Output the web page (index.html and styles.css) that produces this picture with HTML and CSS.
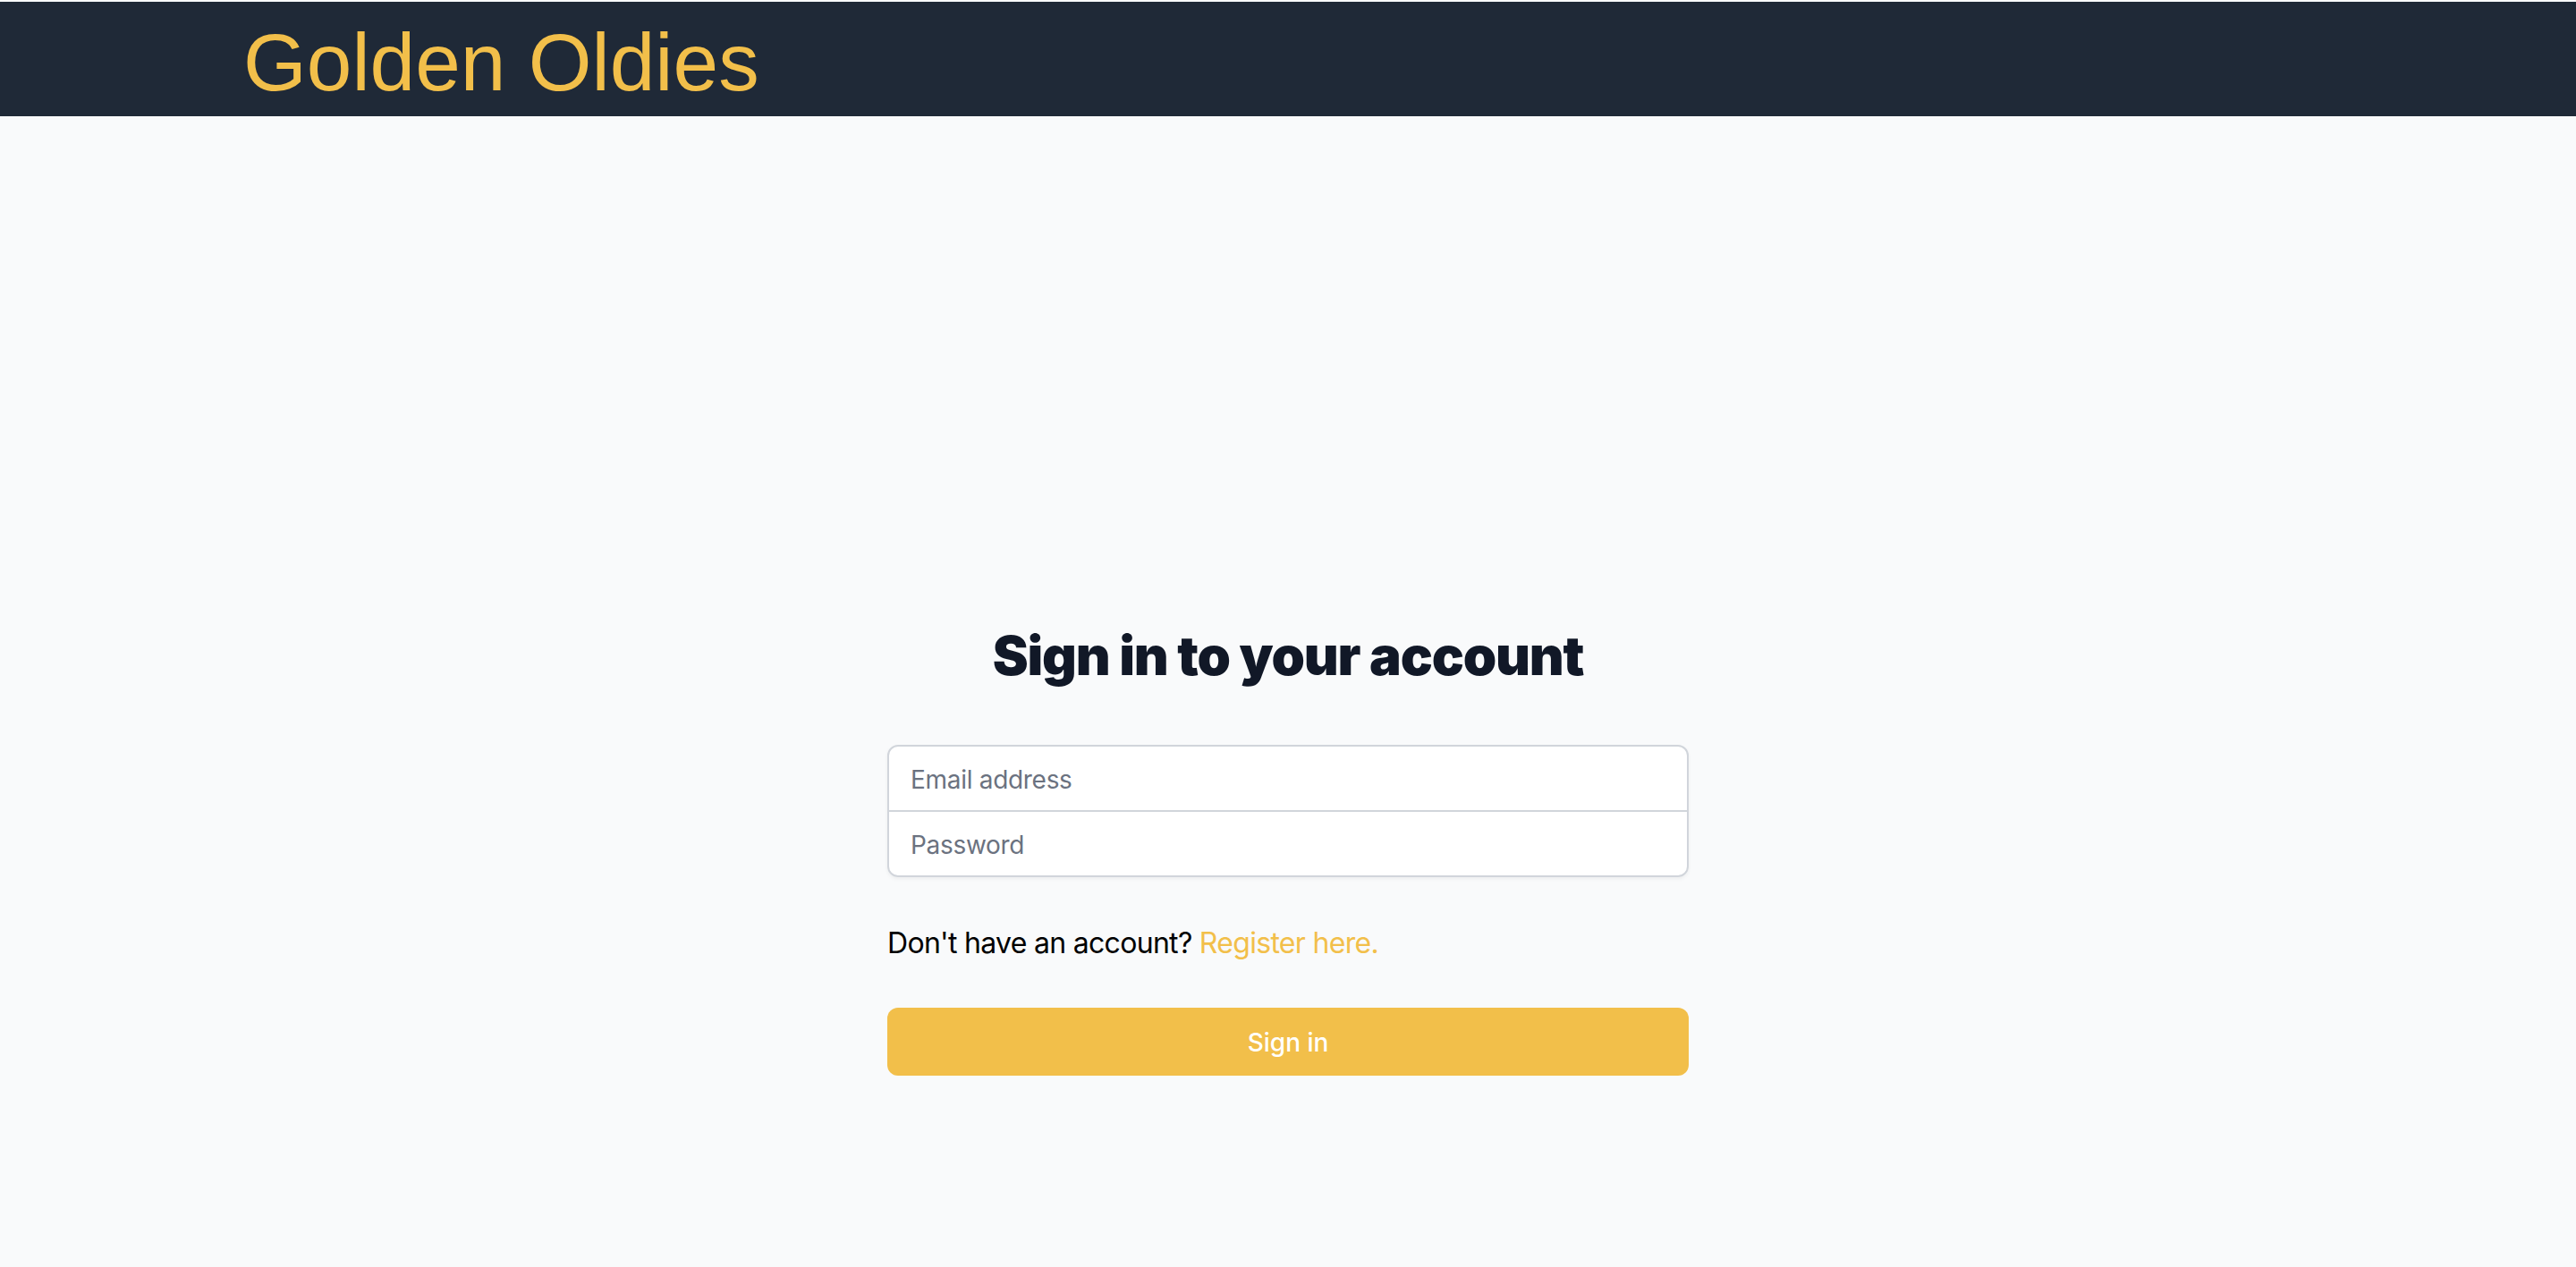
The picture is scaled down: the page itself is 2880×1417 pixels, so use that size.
FILE: index.html
```html
<!DOCTYPE html>
<html lang="en">
<head>
<meta charset="utf-8">
<title>Golden Oldies</title>
<link rel="stylesheet" href="styles.css">
</head>
<body>
<header class="topbar">
  <div class="brand">Golden Oldies</div>
</header>
<main class="main">
  <div class="panel">
    <h2 class="title">Sign in to your account</h2>
    <form class="form">
      <div class="fields">
        <input class="field field-top" type="email" placeholder="Email address">
        <input class="field field-bottom" type="password" placeholder="Password">
      </div>
      <p class="note">Don't have an account? <a class="link" href="#">Register here.</a></p>
      <button class="submit" type="button">Sign in</button>
    </form>
  </div>
</main>
</body>
</html>
```

FILE: styles.css
```css
* { box-sizing: border-box; }
html, body { margin: 0; padding: 0; }
body {
  background: #f9fafb;
  padding-top: 2px;
  font-family: Inter, "Noto Sans", sans-serif;
  min-height: 100vh;
}
.topbar {
  height: 128px;
  background: #1f2937;
  display: flex;
  align-items: center;
  padding: 9px 0 0 272px;
}
.brand {
  font-family: "Liberation Sans", Arial, sans-serif;
  font-size: 91px;
  line-height: 1.1;
  color: #f2bf4a;
}
.main {
  display: flex;
  justify-content: center;
  padding-top: 567px;
}
.panel {
  width: 896px;
  display: flex;
  flex-direction: column;
}
.title {
  margin: 0;
  text-align: center;
  font-size: 60px;
  line-height: 72px;
  font-weight: 900;
  color: #111827;
  letter-spacing: -1.2px;
}
.form {
  margin-top: 64px;
  display: flex;
  flex-direction: column;
}
.fields {
  display: flex;
  flex-direction: column;
  border-radius: 12px;
  box-shadow: 0 2px 4px rgba(0,0,0,0.05);
}
.field {
  display: block;
  width: 100%;
  height: 75px;
  margin: 0;
  padding: 2px 24px 0;
  border: 2px solid #d1d5db;
  background: #fff;
  font-family: Inter, "Noto Sans", sans-serif;
  font-size: 28px;
  letter-spacing: -0.3px;
  color: #111827;
  outline: none;
}
.field::placeholder { color: #6b7280; }
.field-top { border-radius: 12px 12px 0 0; }
.field-bottom { border-radius: 0 0 12px 12px; margin-top: -2px; }
.note {
  margin: 50px 0 0 0;
  font-size: 32px;
  line-height: 48px;
  letter-spacing: -0.7px;
  color: #000;
}
.link { color: #f2bf4a; text-decoration: none; }
.submit {
  margin-top: 48px;
  height: 76px;
  width: 100%;
  border: none;
  border-radius: 12px;
  background: #f2bf4a;
  color: #fff;
  font-family: Inter, "Noto Sans", sans-serif;
  font-size: 28px;
  font-weight: 500;
  padding-top: 3px;
  cursor: pointer;
}
```
